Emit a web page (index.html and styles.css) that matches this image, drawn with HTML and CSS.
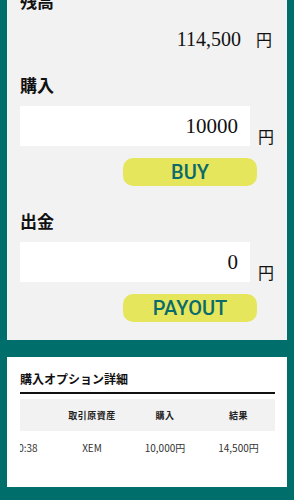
FILE: index.html
```html
<!DOCTYPE html>
<html lang="ja">
<head>
<meta charset="utf-8">
<title>取引</title>
<link rel="stylesheet" href="styles.css">
</head>
<body>
<main class="page">
  <section class="card trade">
    <h2 class="label">残高</h2>
    <div class="balance">
      <span class="amount">114,500</span>
      <span class="yen">円</span>
    </div>

    <h2 class="label label-buy">購入</h2>
    <div class="field-row">
      <input class="field" type="text" value="10000">
      <span class="yen">円</span>
    </div>
    <button class="action" type="button">BUY</button>

    <h2 class="label label-payout">出金</h2>
    <div class="field-row">
      <input class="field" type="text" value="0">
      <span class="yen">円</span>
    </div>
    <button class="action" type="button">PAYOUT</button>
  </section>

  <section class="card detail">
    <h3 class="detail-title">購入オプション詳細</h3>
    <div class="table-wrap">
      <table class="options">
        <colgroup>
          <col class="c-time"><col class="c-asset"><col class="c-buy"><col class="c-result">
        </colgroup>
        <thead>
          <tr><th>取引日時</th><th>取引原資産</th><th>購入</th><th>結果</th></tr>
        </thead>
        <tbody>
          <tr><td>2021/05/10 10:00:38</td><td>XEM</td><td>10,000円</td><td>14,500円</td></tr>
        </tbody>
      </table>
    </div>
  </section>
</main>
</body>
</html>
```

FILE: styles.css
```css
html, body {
  margin: 0;
  padding: 0;
}
body {
  background: #006f6b;
  color: #111;
  font-family: "Liberation Serif", "Noto Sans CJK JP", serif;
}
.page {
  padding: 0 7px 13px;
  margin-top: -9px;
}
.card {
  background: #f2f2f2;
}
.trade {
  padding: 0 14px 18px 13px;
}
.label {
  margin: 0;
  font-family: "Liberation Serif", "Noto Sans CJK JP", serif;
  font-size: 17px;
  font-weight: 700;
  line-height: 24px;
}
.balance {
  display: flex;
  justify-content: flex-end;
  align-items: baseline;
  margin-top: 9px;
  height: 30px;
  line-height: 30px;
}
.amount {
  font-size: 20px;
  margin-right: 15px;
}
.yen {
  font-family: "Noto Sans CJK JP", sans-serif;
  font-size: 16px;
  line-height: 20px;
}
.balance .yen {
  margin-right: 1px;
}
.label-buy {
  margin-top: 21px;
}
.field-row {
  display: flex;
  align-items: flex-end;
  margin-top: 7px;
}
.field {
  box-sizing: border-box;
  width: 230px;
  height: 40px;
  border: 0;
  padding: 0 12px 0 0;
  margin: 0 8px 0 0;
  background: #fff;
  text-align: right;
  font-family: "Liberation Serif", serif;
  font-size: 21px;
  color: #111;
  outline: none;
}
.action {
  display: block;
  width: 134px;
  height: 28px;
  margin: 12px 0 0 103px;
  padding: 0;
  border: 0;
  border-radius: 10px;
  background: #e6e65c;
  color: #0b6a6a;
  font-family: Roboto, "Liberation Sans", sans-serif;
  font-weight: 500;
  font-size: 20px;
  line-height: 28px;
}
.label-payout {
  margin-top: 25px;
}
.detail {
  margin-top: 17px;
  background: #fff;
  padding: 14px 12px 23px 13px;
  font-family: "Noto Sans CJK JP", sans-serif;
}
.detail-title {
  margin: 0;
  font-size: 12px;
  font-weight: 700;
  line-height: 16px;
  padding-bottom: 5px;
  border-bottom: 2px solid #111;
}
.table-wrap {
  margin-top: 5px;
  overflow: hidden;
  direction: rtl;
}
.options {
  direction: ltr;
  border-collapse: collapse;
  table-layout: fixed;
  width: 349px;
}
.c-time { width: 130px; }
.c-asset { width: 72px; }
.c-buy { width: 74px; }
.c-result { width: 73px; }
.options th {
  height: 32px;
  padding: 0;
  background: #f2f2f2;
  font-size: 9px;
  letter-spacing: 0.5px;
  font-weight: 700;
  color: #222;
  text-align: center;
}
.options td {
  height: 33px;
  padding: 0;
  font-size: 10px;
  color: #333;
  text-align: center;
  white-space: nowrap;
}
```
